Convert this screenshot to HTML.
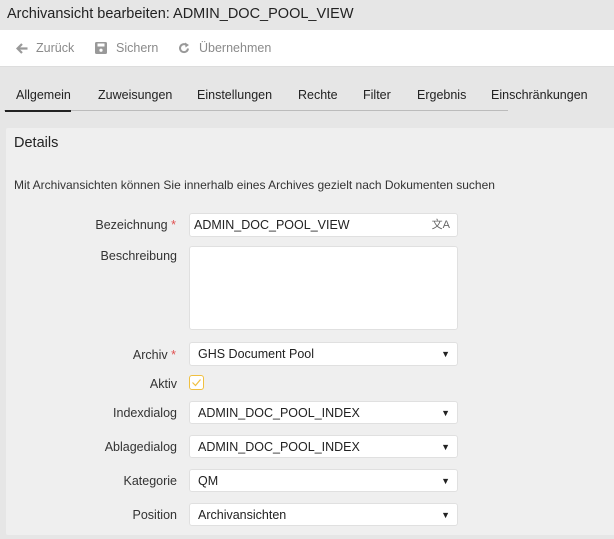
<!DOCTYPE html>
<html><head><style>
body{margin:0;width:614px;height:539px;background:#e6e6e6;font-family:"Liberation Sans",sans-serif;color:#333;overflow:hidden;position:relative;font-size:12.5px}
.abs{position:absolute;white-space:nowrap}
.hdr{left:0;top:0;width:614px;height:30px;background:#e6e6e6}
.tb{left:0;top:30px;width:614px;height:36px;background:#fff;border-bottom:1px solid #ddd}
.tbt{color:#8a8a8a;font-size:12.5px}
.panel{left:6px;top:128px;width:620px;height:407px;background:#efefef;border-radius:2px}
.fld{position:absolute;left:189px;width:269px;height:23px;background:#fff;border:1px solid #e0e0e0;border-radius:3px;box-sizing:border-box;font-size:12.5px;color:#222;padding-left:8px;line-height:22px}
.fld .ar{position:absolute;right:7px;top:0;font-size:9px;color:#222}
.lbl{position:absolute;right:438px;font-size:12.5px;color:#333;text-align:right}
.req{color:#e05050}
.tab{position:absolute;top:88px;font-size:12.5px;color:#222;white-space:nowrap}
</style></head><body>
<div class="abs hdr"></div>
<div class="abs" style="left:7px;top:6px;font-size:14.5px;color:#222">Archivansicht bearbeiten: ADMIN_DOC_POOL_VIEW</div>
<div class="abs tb"></div>
<svg class="abs" style="left:16px;top:43px" width="12" height="11" viewBox="0 0 12 11"><path d="M6 1 L1.5 5.5 L6 10 M1.5 5.5 H11.5" stroke="#999" stroke-width="2.2" fill="none"/></svg>
<div class="abs tbt" style="left:36px;top:41px">Zurück</div>
<svg class="abs" style="left:95px;top:42px" width="12" height="12" viewBox="0 0 12 12"><rect x="0" y="0" width="12" height="12" rx="1.5" fill="#999"/><rect x="2.5" y="1.5" width="7" height="3" fill="#fff"/><circle cx="6" cy="8.2" r="1.6" fill="#fff"/></svg>
<div class="abs tbt" style="left:116px;top:41px">Sichern</div>
<svg class="abs" style="left:178px;top:42px" width="12" height="12" viewBox="0 0 12 12"><path d="M10 6.5 A4 4 0 1 1 8.5 3" stroke="#999" stroke-width="2" fill="none"/><path d="M7 0.5 L11 3 L7.5 5.5 Z" fill="#999"/></svg>
<div class="abs tbt" style="left:199px;top:41px">Übernehmen</div>
<div class="abs" style="left:4px;top:110px;width:504px;height:1px;background:#bbb"></div>
<div class="abs" style="left:5px;top:110px;width:66px;height:2px;background:#222"></div>
<div class="tab" style="left:16px">Allgemein</div>
<div class="tab" style="left:98px">Zuweisungen</div>
<div class="tab" style="left:197px">Einstellungen</div>
<div class="tab" style="left:298px">Rechte</div>
<div class="tab" style="left:363px">Filter</div>
<div class="tab" style="left:417px">Ergebnis</div>
<div class="tab" style="left:491px">Einschränkungen</div>
<div class="abs panel"></div>
<div class="abs" style="left:14px;top:135px;font-size:14.5px;color:#222">Details</div>
<div class="abs" style="left:14px;top:178px;font-size:12px;color:#333">Mit Archivansichten können Sie innerhalb eines Archives gezielt nach Dokumenten suchen</div>
<div class="lbl" style="top:218px">Bezeichnung <span class="req">*</span></div>
<div class="fld" style="top:213px;height:24px;padding-left:4px">ADMIN_DOC_POOL_VIEW<span class="ar" style="font-size:11px;color:#666">文A</span></div>
<div class="lbl" style="top:249px;right:437px">Beschreibung</div>
<div class="fld" style="top:246px;height:84px"></div>
<div class="lbl" style="top:348px">Archiv <span class="req">*</span></div>
<div class="fld" style="top:342px;height:24px">GHS Document Pool<span class="ar">▼</span></div>
<div class="lbl" style="top:377px;right:437px">Aktiv</div>
<div class="abs" style="left:189px;top:375px;width:15px;height:15px;border:1px solid #f0c040;border-radius:3px;background:#fff;box-sizing:border-box"></div>
<svg class="abs" style="left:191px;top:377px" width="11" height="11" viewBox="0 0 11 11"><path d="M1.5 5.5 L4.5 8.5 L9.5 2.5" stroke="#f0c040" stroke-width="1.2" fill="none"/></svg>
<div class="lbl" style="top:406px;right:437px">Indexdialog</div>
<div class="fld" style="top:401px">ADMIN_DOC_POOL_INDEX<span class="ar">▼</span></div>
<div class="lbl" style="top:440px;right:437px">Ablagedialog</div>
<div class="fld" style="top:435px">ADMIN_DOC_POOL_INDEX<span class="ar">▼</span></div>
<div class="lbl" style="top:474px;right:437px">Kategorie</div>
<div class="fld" style="top:469px">QM<span class="ar">▼</span></div>
<div class="lbl" style="top:508px;right:437px">Position</div>
<div class="fld" style="top:503px">Archivansichten<span class="ar">▼</span></div>
</body></html>
